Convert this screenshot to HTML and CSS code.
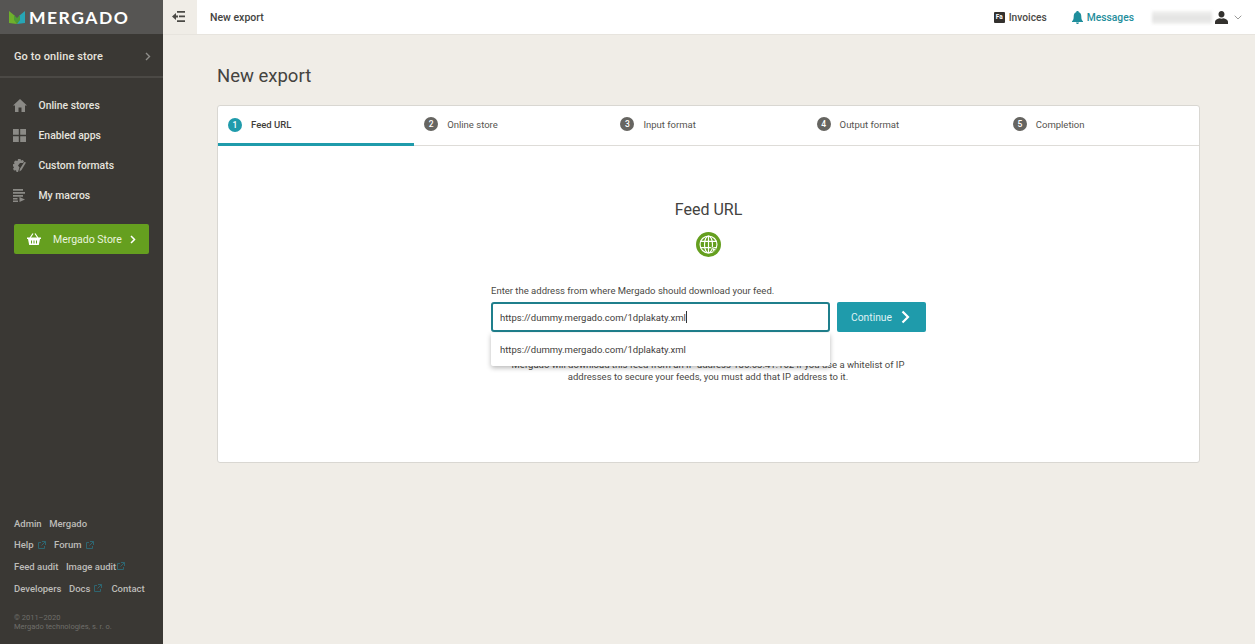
FILE: index.html
```html
<!DOCTYPE html>
<html lang="en">
<head>
<meta charset="utf-8">
<title>New export</title>
<link rel="stylesheet" href="styles.css">
</head>
<body>
<div class="app">
  <aside class="sidebar">
    <div class="brand">
      <svg class="brand-mark" width="16" height="14" viewBox="0 0 16 14"><path d="M0 1l5.500 4.500L8 14 0 13z" fill="#6fb02c"/><path d="M16 1l-5.500 4.500L8 14l8-1z" fill="#27a5b5"/><path d="M5 5l3 3 3-3 0 5-3 4-3-4z" fill="#4d9a35"/></svg>
      <span class="brand-name">MERGADO</span>
    </div>
    <a class="store-link"><span>Go to online store</span>
      <svg width="6" height="9" viewBox="0 0 6 9"><path d="M1 1l3.500 3.500L1 8" fill="none" stroke="#8f8e8a" stroke-width="1.400"/></svg>
    </a>
    <nav class="menu">
      <a class="menu-item"><svg class="menu-icon" width="14" height="13" viewBox="0 0 14 13"><path d="M7 0L0 6.500h2V13h3.500V8.500h3V13H12V6.500h2z" fill="#8b8a86"/></svg><span>Online stores</span></a>
      <a class="menu-item"><svg class="menu-icon" width="13" height="13" viewBox="0 0 13 13"><path d="M0 0h5.800v5.800H0zM7.200 0H13v5.800H7.200zM0 7.200h5.800V13H0zM7.200 7.200H13V13H7.200z" fill="#8b8a86"/></svg><span>Enabled apps</span></a>
      <a class="menu-item"><svg class="menu-icon" width="14" height="13" viewBox="0 0 14 13"><path d="M5 0h2.500l.5 1.500 1.800-.5 1.200 1.500-1 1.500H7L5 6.500l1.500 2-1 3L5 13H3.500L3 11.200l-2 .3L0 9.800l1-1.300L0 7V5.200l1.500-.5L1 3l1.500-1.500L4.500 2z" fill="#8b8a86"/><path d="M13 3.500L8.500 11 6.500 12.500 6.800 10 11.300 3z" fill="#8b8a86"/></svg><span>Custom formats</span></a>
      <a class="menu-item"><svg class="menu-icon" width="13" height="13" viewBox="0 0 13 13"><path d="M0 0h10v1.700H0zM0 3h12v1.700H0zM0 6h10v1.700H0zM0 9h4.500v1.500H0zM0 11.500h5V13H0z" fill="#8b8a86"/><path d="M6.500 8l5.500 2.500L6.500 13z" fill="#8b8a86"/></svg><span>My macros</span></a>
    </nav>
    <a class="market">
      <svg width="14" height="12" viewBox="0 0 14 12"><path d="M0 4.500h14v1.500h-1L11.800 12H2.200L1 6H0z" fill="#fff"/><path d="M3 5l3-4.500M11 5L8 .5" stroke="#fff" stroke-width="1.200" fill="none"/><path d="M4.500 7.500v3M7 7.500v3M9.500 7.500v3" stroke="#659f1f" stroke-width="1"/></svg>
      <span class="market-label">Mergado Store</span>
      <svg width="6" height="9" viewBox="0 0 6 9"><path d="M1 1l3.500 3.500L1 8" fill="none" stroke="#fff" stroke-width="1.500"/></svg>
    </a>
    <div class="footer">
      <div class="foot-row"><a>Admin</a><a>Mergado</a></div>
      <div class="foot-row"><a>Help<svg class="ext" width="8" height="8" viewBox="0 0 8 8"><path d="M3 1.500H.5v6h6V5M4 .5h3.500V4M7.500.5L3.500 4.500" fill="none" stroke="#2e6570" stroke-width="1"/></svg></a><a class="forum">Forum<svg class="ext" width="8" height="8" viewBox="0 0 8 8"><path d="M3 1.500H.5v6h6V5M4 .5h3.500V4M7.500.5L3.500 4.500" fill="none" stroke="#2e6570" stroke-width="1"/></svg></a></div>
      <div class="foot-row"><a>Feed audit</a><a>Image audit<svg class="ext tight" width="8" height="8" viewBox="0 0 8 8"><path d="M3 1.500H.5v6h6V5M4 .5h3.500V4M7.500.5L3.500 4.500" fill="none" stroke="#2e6570" stroke-width="1"/></svg></a></div>
      <div class="foot-row"><a>Developers</a><a>Docs<svg class="ext" width="8" height="8" viewBox="0 0 8 8"><path d="M3 1.500H.5v6h6V5M4 .5h3.500V4M7.500.5L3.500 4.500" fill="none" stroke="#2e6570" stroke-width="1"/></svg></a><a class="spaced-s">Contact</a></div>
      <p class="copy">© 2011–2020<br>Mergado technologies, s. r. o.</p>
    </div>
  </aside>
  <div class="content">
    <header class="topbar">
      <button class="toggle" type="button" aria-label="Toggle menu">
        <svg width="13" height="11" viewBox="0 0 13 11"><path d="M5 0h8v1.700H5zM7 4.600h6v1.700H7zM5 9.300h8V11H5z" fill="#4a4945"/><path d="M0 5.500L4 2v2.500h2v2H4V9z" fill="#4a4945"/></svg>
      </button>
      <div class="crumb">New export</div>
      <a class="top-link invoices"><span class="fa-badge">Fa</span>Invoices</a>
      <a class="top-link messages"><svg width="11" height="13" viewBox="0 0 11 13"><path d="M5.500 0C6.300 0 6.800.5 6.800 1.200 8.600 1.800 9.300 3.300 9.300 5.500c0 2.500.5 3.700 1.700 4.800v.7H0v-.7c1.200-1.100 1.700-2.300 1.700-4.800 0-2.200.7-3.700 2.500-4.300C4.200.5 4.700 0 5.500 0zM4 11.500h3C7 12.400 6.300 13 5.500 13S4 12.400 4 11.500z" fill="#1f8e9c"/></svg>Messages</a>
      <div class="user">
        <span class="blurred"></span>
        <svg width="13" height="13" viewBox="0 0 13 13"><path d="M6.500 0c1.900 0 3 1.400 3 3.300 0 1.700-.9 3.200-3 3.200s-3-1.500-3-3.200C3.500 1.400 4.600 0 6.500 0zM0 13v-2.300C0 8.800 2.500 8 4.500 7.300c1.200.6 2.800.6 4 0 2 .7 4.500 1.500 4.500 3.400V13z" fill="#33312e"/></svg>
        <svg width="8" height="5" viewBox="0 0 8 5"><path d="M.7.700L4 4 7.300.7" fill="none" stroke="#9a9a98" stroke-width="1"/></svg>
      </div>
    </header>
    <main class="main">
      <h1 class="title">New export</h1>
      <section class="card">
        <ol class="tabs">
          <li class="tab active"><span class="num">1</span>Feed URL</li>
          <li class="tab"><span class="num">2</span>Online store</li>
          <li class="tab"><span class="num">3</span>Input format</li>
          <li class="tab"><span class="num">4</span>Output format</li>
          <li class="tab"><span class="num">5</span>Completion</li>
        </ol>
        <div class="body">
          <h2 class="step-title">Feed URL</h2>
          <span class="globe">
            <svg width="19" height="19" viewBox="0 0 18 18" fill="none" stroke="#fff" stroke-width="1.100"><circle cx="9" cy="9" r="8"/><ellipse cx="9" cy="9" rx="3.800" ry="8"/><path d="M9 1v16M1.500 6h15M1.500 12h15"/><path d="M11.500 11.500l5.500 2-2.300.9-.9 2.300z" fill="#fff" stroke="#659f1f" stroke-width=".6"/></svg>
          </span>
          <div class="form">
            <label class="label" for="url">Enter the address from where Mergado should download your feed.</label>
            <div class="field-row">
              <div class="field-wrap">
                <div class="field" id="url">https://dummy.mergado.com/1dplakaty.xml<span class="caret"></span></div>
                <div class="suggest">https://dummy.mergado.com/1dplakaty.xml</div>
              </div>
              <a class="continue">Continue<svg width="9" height="14" viewBox="0 0 9 14"><path d="M1.500 1.500L7 7l-5.500 5.500" fill="none" stroke="#fff" stroke-width="2.200"/></svg></a>
            </div>
            <p class="note">Mergado will download this feed from an IP address 185.63.41.162 if you use a whitelist of IP<br>addresses to secure your feeds, you must add that IP address to it.</p>
          </div>
        </div>
      </section>
    </main>
  </div>
</div>
</body>
</html>
```

FILE: styles.css
```css
* { box-sizing: border-box; }
html, body { margin: 0; height: 100%; }
body {
  font-family: Roboto, "Liberation Sans", sans-serif;
  font-size: 11px;
  color: #3f3e3b;
  background: #f0ede7;
  overflow: hidden;
}
.app { display: flex; height: 644px; }

.sidebar {
  width: 163px;
  flex: none;
  background: #3a3834;
  display: flex;
  flex-direction: column;
  color: #e6e4df;
}
.brand {
  height: 34px;
  background: #565553;
  display: flex;
  align-items: center;
  padding-left: 9px;
  gap: 4px;
}
.brand-mark { display: block; }
.brand-name {
  font-family: Lato, "Liberation Sans", sans-serif;
  font-size: 17.500px;
  font-weight: 700;
  letter-spacing: 1.500px;
  color: #fff;
}
.store-link {
  height: 44px;
  padding: 2px 12px 0 14px;
  border-bottom: 2px solid #4b4945;
  display: flex;
  align-items: center;
  justify-content: space-between;
  font-size: 11px;
  font-weight: 500;
  letter-spacing: .12px;
  margin-bottom: 12px;
}
.menu { display: flex; flex-direction: column; }
.menu-item {
  height: 30px;
  display: flex;
  align-items: center;
  font-size: 10.400px;
  font-weight: 500;
}
.menu-icon { margin-left: 13px; }
.menu-item span { position: absolute; left: 38.500px; }
.market {
  margin: 14px 14px 0;
  width: 135px;
  height: 30px;
  background: #659f1f;
  border-radius: 2px;
  display: flex;
  align-items: center;
  padding-left: 13px;
  color: #e9f3dd;
  font-size: 10.500px;
}
.market-label { margin-left: 12px; margin-right: 8px; }
.footer {
  margin-top: auto;
  padding: 0 14px 13px;
  color: #bdbcb8;
  font-size: 9.500px;
  font-weight: 500;
}
.foot-row {
  display: flex;
  gap: 7.500px;
  height: 21.700px;
  align-items: center;
  white-space: nowrap;
}
.foot-row a { display: inline-flex; align-items: center; }
.ext { margin-left: 4px; }
.ext.tight { margin-left: 1px; }
.forum { margin-left: 1px; }
.spaced-s { margin-left: 1.500px; }
.copy {
  margin: 14px 0 0;
  font-size: 7.500px;
  font-weight: 400;
  line-height: 9px;
  color: #6f6e6a;
}

.content { flex: 1; display: flex; flex-direction: column; min-width: 0; }
.topbar {
  height: 35px;
  flex: none;
  background: #fff;
  border-bottom: 1px solid #e7e4de;
  display: flex;
  align-items: center;
}
.toggle {
  width: 34px;
  height: 34px;
  border: 0;
  padding: 0 3px 1px 0;
  background: #f0ede7;
  display: flex;
  align-items: center;
  justify-content: center;
}
.crumb { margin-left: 13px; font-size: 10.500px; font-weight: 500; flex: 1; color: #44433f; }
.top-link {
  display: flex;
  align-items: center;
  font-size: 10.300px;
  font-weight: 500;
  color: #4a4945;
  margin-right: 24px;
}
.invoices { font-size: 10.200px; margin-right: 25px; }
.fa-badge {
  width: 11px;
  height: 11px;
  background: #33312e;
  color: #fff;
  font-size: 6.500px;
  font-weight: 700;
  border-radius: 1px;
  display: flex;
  align-items: center;
  justify-content: center;
  margin-right: 4px;
}
.messages { color: #1f8e9c; margin-right: 18px; }
.messages svg { margin-right: 4px; }
.user { display: flex; align-items: center; width: 103px; }
.blurred {
  width: 60px;
  height: 13px;
  background: linear-gradient(180deg, #f1f1f0, #e2e2e1 55%, #efefee);
  filter: blur(1.500px);
  margin-right: 3px;
}
.user svg:last-child { margin-left: 6px; }

.main { flex: 1; padding: 0 54px 0 54px; min-height: 0; }
.title {
  margin: 29px 0 17px;
  font-size: 18.500px;
  font-weight: 400;
  line-height: 24px;
  color: #44433f;
}
.card {
  width: 983px;
  height: 358px;
  background: #fff;
  border: 1px solid #d9d7d2;
  border-radius: 3px;
}
.tabs {
  list-style: none;
  margin: 0;
  padding: 0;
  display: grid;
  grid-template-columns: repeat(5, 1fr);
  height: 40px;
  border-bottom: 1px solid #dedcd8;
}
.tab {
  height: 40px;
  display: flex;
  align-items: center;
  padding: 0 0 4px 10px;
  font-size: 9.500px;
  color: #55544f;
}
.tab.active {
  padding-bottom: 0;
  border-bottom: 3px solid #1f9bab;
  font-weight: 500;
  color: #3f3e3b;
}
.num {
  width: 14px;
  height: 14px;
  border-radius: 50%;
  background: #666561;
  color: #fff;
  font-size: 8.500px;
  font-weight: 500;
  display: flex;
  align-items: center;
  justify-content: center;
  margin-right: 9px;
}
.active .num { background: #1f9bab; }
.body { display: flex; flex-direction: column; align-items: center; }
.step-title {
  margin: 54px 0 0;
  font-size: 16px;
  font-weight: 400;
  line-height: 20px;
  color: #44433f;
}
.globe {
  width: 25px;
  height: 25px;
  border-radius: 50%;
  background: #659f1f;
  margin-top: 12px;
  display: flex;
  align-items: center;
  justify-content: center;
}
.form { width: 435px; margin-top: 27px; }
.label { display: block; font-size: 9.500px; line-height: 14px; color: #4a4945; margin-bottom: 4px; }
.field-row { display: flex; gap: 7px; }
.field-wrap { position: relative; width: 339px; }
.field {
  height: 30px;
  border: 2px solid #1f7f8c;
  border-radius: 3px;
  padding: 0 7px;
  display: flex;
  align-items: center;
  font-size: 9.500px;
  color: #3f3e3b;
}
.caret { width: 1px; height: 12px; background: #333; }
.suggest {
  position: absolute;
  left: 0;
  right: 0;
  top: 31px;
  height: 33px;
  background: #fff;
  box-shadow: 0 2px 5px rgba(0, 0, 0, .28);
  border-radius: 0 0 2px 2px;
  padding: 0 9px;
  display: flex;
  align-items: center;
  font-size: 9.500px;
  color: #3f3e3b;
}
.continue {
  width: 89px;
  height: 30px;
  background: #1f9bab;
  border-radius: 2px;
  color: #dff2f4;
  font-size: 10.300px;
  display: flex;
  align-items: center;
  padding-left: 14px;
  gap: 9px;
}
.note {
  margin: 27px 0 0;
  text-align: center;
  font-size: 9.500px;
  line-height: 11.500px;
  color: #4a4945;
  padding-right: 1px;
}
```
